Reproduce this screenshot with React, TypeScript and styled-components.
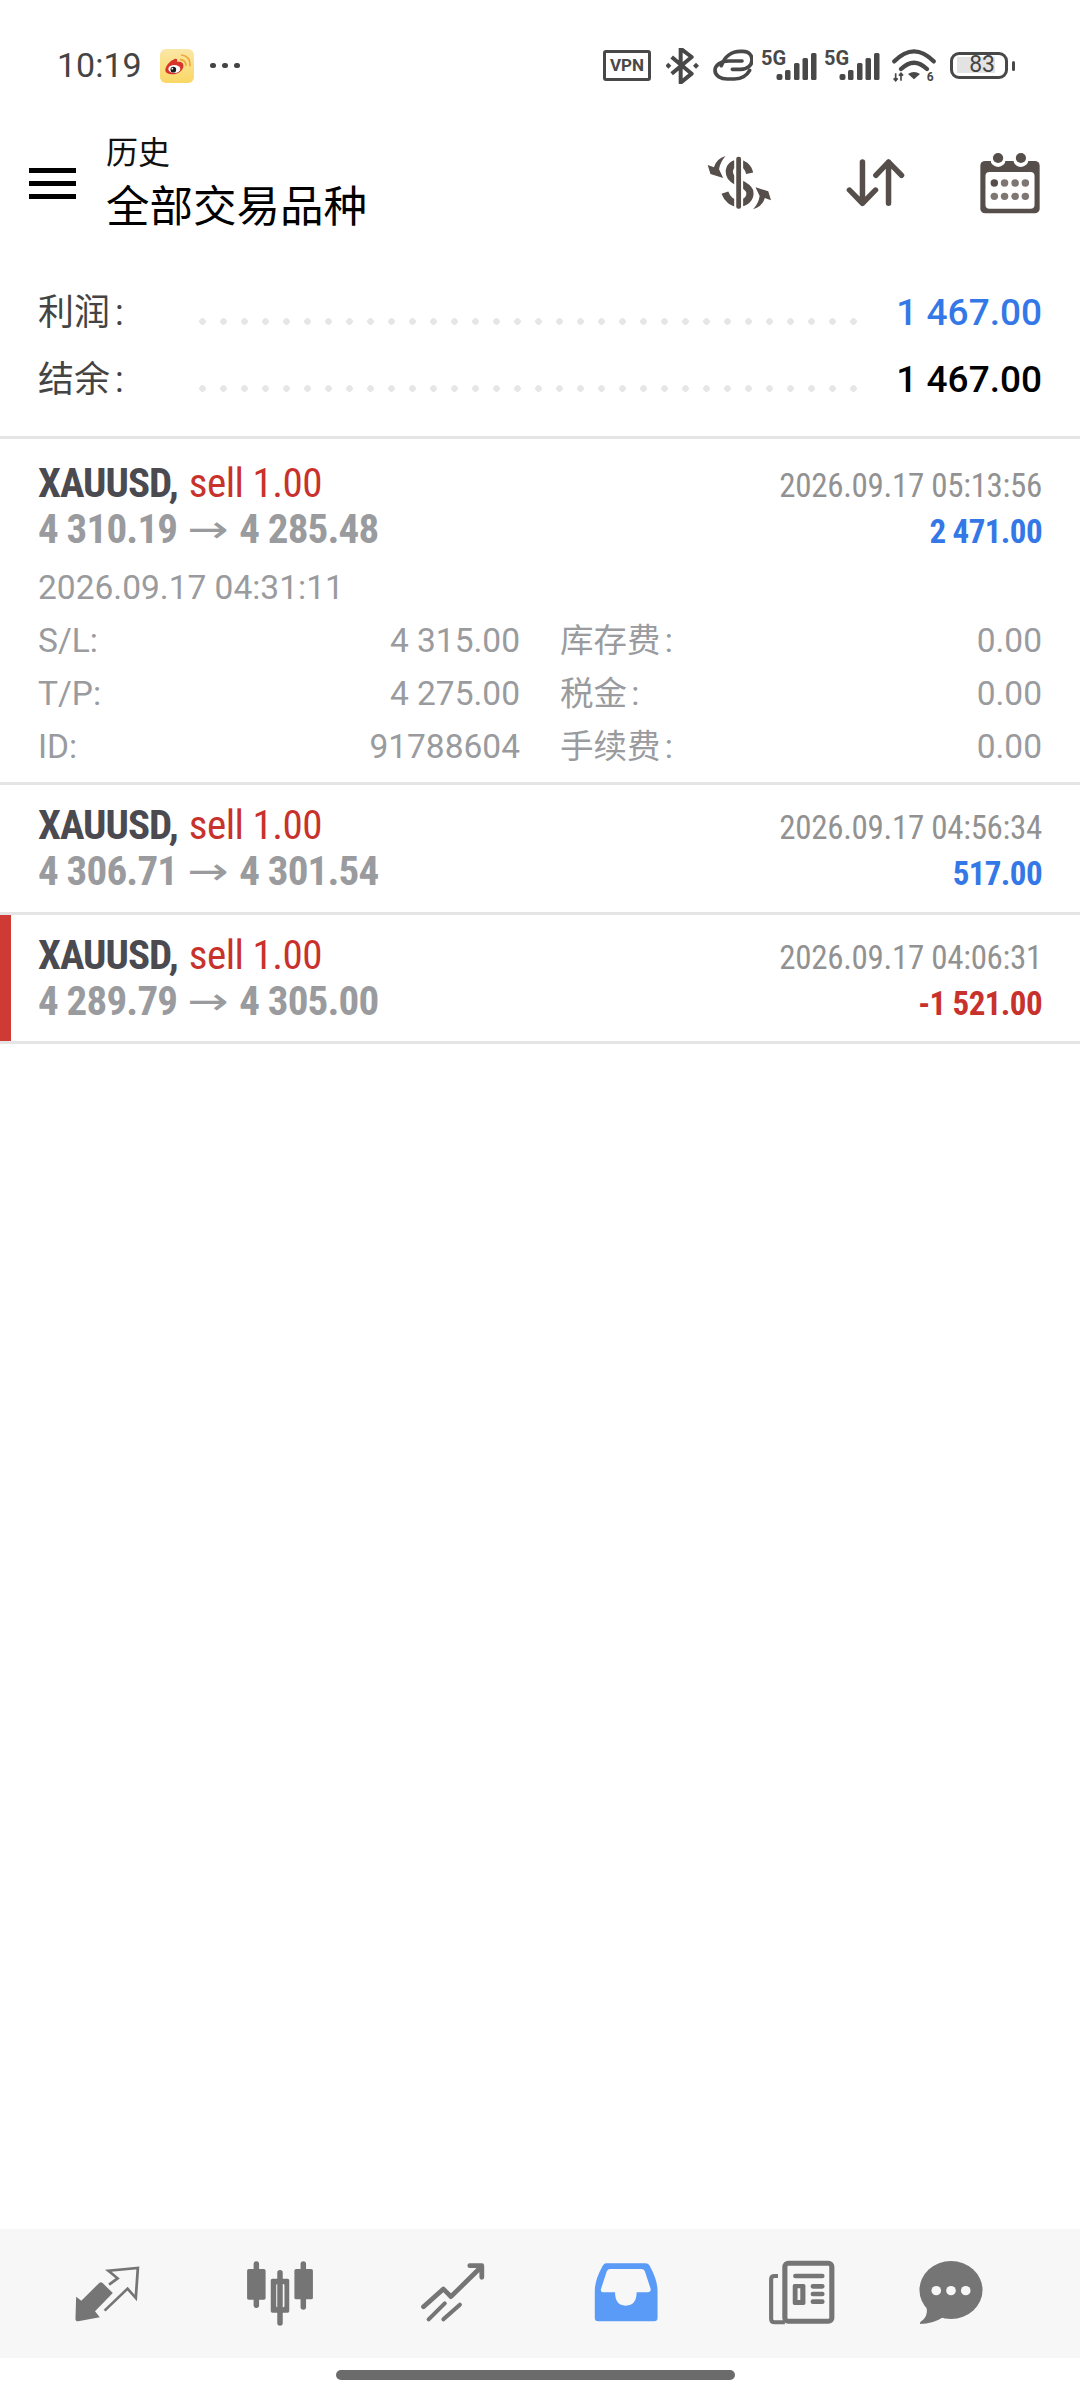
import React from 'react';
import styled, { createGlobalStyle } from 'styled-components';

const GlobalStyle = createGlobalStyle`
  html, body {
    margin: 0;
    padding: 0;
    background: #ffffff;
  }
  body {
    font-family: Roboto, "Noto Sans CJK SC", sans-serif;
  }
`;

const Page = styled.div`
  position: relative;
  width: 1080px;
  height: 2400px;
  display: flex;
  flex-direction: column;
  background: #ffffff;
  overflow: hidden;
`;

const StatusBar = styled.div`
  height: 47px;
  margin-top: 42px;
  display: flex;
  align-items: center;
  justify-content: space-between;
  padding: 0 65px 0 57px;
`;

const StatusLeft = styled.div`
  display: flex;
  align-items: center;
`;

const StatusRight = styled.div`
  display: flex;
  align-items: center;
  height: 36px;
`;

const Clock = styled.span`
  font-size: 34px;
  color: #444444;
  line-height: 47px;
  width: 103px;
`;

const MoreDots = styled.span`
  display: flex;
  gap: 6.5px;
  margin-left: 16px;
`;

const MoreDot = styled.i`
  width: 5.5px;
  height: 5.5px;
  border-radius: 50%;
  background: #444444;
`;

const VpnBox = styled.span`
  width: 48px;
  height: 31px;
  box-sizing: border-box;
  border: 3px solid #484848;
  border-radius: 3px;
  font-size: 17px;
  font-weight: 700;
  line-height: 25px;
  text-align: center;
  color: #484848;
`;

const SignalGroup = styled.span<{ $gap: number }>`
  display: flex;
  height: 30px;
  margin-left: ${(p) => p.$gap}px;
`;

const SignalLabel = styled.span`
  font-size: 20px;
  font-weight: 700;
  line-height: 15px;
  color: #484848;
  width: 25px;
`;

const Battery = styled.span`
  width: 58px;
  height: 27px;
  box-sizing: border-box;
  border: 3px solid #484848;
  border-radius: 9px;
  margin-left: 14px;
  padding: 2px 0 0 4px;
`;

const BatteryLevel = styled.span`
  display: block;
  width: 38px;
  height: 16px;
  background: #e3e3e3;
  font-size: 23px;
  line-height: 16px;
  text-align: right;
  color: #444444;
`;

const BatteryNub = styled.span`
  width: 3px;
  height: 10px;
  border-radius: 2px;
  background: #484848;
  margin-left: 4px;
`;

const Header = styled.div`
  height: 112px;
  margin-top: 38px;
  display: flex;
  align-items: center;
  padding-left: 29px;
`;

const Burger = styled.div`
  width: 47px;
  display: flex;
  flex-direction: column;
  gap: 8px;
`;

const BurgerLine = styled.i`
  display: block;
  height: 5px;
  background: #000000;
`;

const TitleBlock = styled.div`
  margin-left: 30px;
  flex: 1;
`;

const Subtitle = styled.div`
  font-size: 32px;
  line-height: 50px;
  color: #111111;
`;

const Title = styled.div`
  font-size: 43.5px;
  line-height: 60px;
  color: #000000;
`;

const HeaderIcons = styled.div`
  display: flex;
  align-items: center;
  margin-right: 40px;
  gap: 75px;
`;

const Summary = styled.div`
  padding: 40px 38px 23px 38px;
  border-bottom: 3px solid #e5e5e5;
`;

const SummaryRow = styled.div`
  height: 67px;
  display: flex;
  align-items: center;
`;

const SummaryLabel = styled.div`
  width: 154px;
  font-size: 36px;
  word-spacing: -4px;
  color: #444444;
  margin-bottom: 8px;
`;

const Leader = styled.div`
  flex: 1;
  height: 7px;
  margin-top: 18px;
  background: radial-gradient(circle, #e6e6e6 3px, transparent 3.6px) 0 0 / 21px 100%;
`;

const SummaryValue = styled.div<{ $tone: string }>`
  width: 178px;
  font-size: 37px;
  font-weight: 500;
  text-align: right;
  color: ${(p) => p.$tone};
`;

const Trade = styled.div<{ $loss?: boolean; $top: number }>`
  position: relative;
  padding: ${(p) => p.$top}px 38px 0 38px;
  border-bottom: 3px solid #e5e5e5;
  &::before {
    content: '';
    display: ${(p) => (p.$loss ? 'block' : 'none')};
    position: absolute;
    left: 0;
    top: 0;
    bottom: 0;
    width: 11px;
    background: #cf3a35;
  }
`;

const TradeTop = styled.div<{ $height: number }>`
  height: ${(p) => p.$height}px;
  display: flex;
  justify-content: space-between;
`;

const Condensed = styled.div`
  font-stretch: 75%;
  white-space: nowrap;
`;

const MainLine = styled(Condensed)`
  font-size: 41px;
  line-height: 46px;
  display: flex;
  align-items: center;
`;

const Symbol = styled.span`
  font-weight: 700;
  letter-spacing: -1px;
  color: #4a4a50;
  margin-right: 11px;
`;

const Side = styled.span`
  letter-spacing: -0.5px;
  color: #c8322d;
`;

const Price = styled.span`
  font-weight: 700;
  letter-spacing: -0.8px;
  color: #9a9b9e;
`;

const Arrow = styled.span`
  font-family: "DejaVu Sans", sans-serif;
  font-stretch: normal;
  font-size: 38px;
  line-height: 46px;
  color: #9a9b9e;
  margin: 0 15px;
  transform: scaleX(1.3);
`;

const TradeRight = styled.div`
  text-align: right;
  padding-top: 3px;
`;

const TradeDate = styled(Condensed)`
  font-size: 33px;
  line-height: 46px;
  letter-spacing: -0.3px;
  color: #929292;
`;

const Profit = styled(Condensed)<{ $tone: string }>`
  font-size: 33px;
  line-height: 45px;
  letter-spacing: -0.6px;
  font-weight: 700;
  color: ${(p) => p.$tone};
`;

const Details = styled.div`
  padding-bottom: 9px;
  font-size: 33.5px;
  line-height: 53px;
  color: #9a9b9e;
`;

const DetailGrid = styled.div`
  display: grid;
  grid-template-columns: 1fr 1fr;
  column-gap: 40px;
`;

const DetailCell = styled.div`
  display: flex;
  justify-content: space-between;
`;

const DetailLabel = styled.span`
  word-spacing: -4px;
`;

const BottomNav = styled.nav`
  position: absolute;
  left: 0;
  right: 0;
  bottom: 42px;
  height: 129px;
  background: #f7f7f7;
  display: flex;
  align-items: center;
  padding-left: 71px;
  gap: 101px;
`;

const NavItem = styled.span<{ $shift?: number }>`
  display: flex;
  margin-left: ${(p) => p.$shift || 0}px;
`;

const HomeBar = styled.div`
  position: absolute;
  left: 336px;
  bottom: 20px;
  width: 399px;
  height: 10px;
  border-radius: 5px;
  background: #6b6b6b;
`;

const WeiboIcon = () => (
  <svg width="34" height="34" viewBox="60 28 102 102">
    <defs>
      <linearGradient id="weibo-bg" x1="0" y1="0" x2="0" y2="1">
        <stop offset="0" stopColor="#fbe7a6" />
        <stop offset="1" stopColor="#f9d765" />
      </linearGradient>
    </defs>
    <rect x="60" y="28" width="102" height="102" rx="18" fill="url(#weibo-bg)" />
    <path d="M76 92c0-12 12-28 28-34 7-2 9 2 7 9 13-2 21 4 19 15-3 13-18 22-32 22-12 0-22-4-22-12z" fill="#d8352a" />
    <ellipse cx="103" cy="88" rx="18" ry="12" fill="#ffffff" />
    <circle cx="100" cy="90" r="8.5" fill="#1d1d1d" />
    <circle cx="97" cy="87" r="2.5" fill="#ffffff" />
    <path d="M122 60q14 1 16 16M125 46q26 3 25 32" stroke="#eea63a" strokeWidth="5" fill="none" strokeLinecap="round" />
  </svg>
);

const BluetoothIcon = () => (
  <svg width="33" height="36" viewBox="228 38 99 108" style={{ marginLeft: 15 }}>
    <path d="M245 65l60 50-33 27V40l33 25-60 50" stroke="#484848" strokeWidth="12" fill="none" strokeLinejoin="round" />
    <path d="M235 82l9 9-9 9-9-9zM318 82l9 9-9 9-9-9z" fill="#484848" />
  </svg>
);

const LinkIcon = () => (
  <svg width="40" height="33" viewBox="368 44 120 99" style={{ marginLeft: 14 }}>
    <path d="M393 94C403 66 425 51 450 51H458C476 51 485 63 485 77C485 93 471 105 451 105H426" stroke="#484848" strokeWidth="11" fill="none" strokeLinecap="round" />
    <path d="M455 80H416C391 80 374 92 374 108C374 124 391 134 411 134H432C452 134 470 123 478 108" stroke="#484848" strokeWidth="11" fill="none" strokeLinecap="round" />
  </svg>
);

const SignalBars = () => (
  <svg width="41" height="28" viewBox="0 0 40 28" style={{ marginLeft: -10, marginTop: 2 }}>
    <rect x="0" y="21" width="6" height="6" rx="2" fill="#484848" />
    <rect x="8.5" y="17" width="5.5" height="10" rx="1.5" fill="#484848" />
    <rect x="17.5" y="10" width="5.5" height="17" rx="1.5" fill="#484848" />
    <rect x="26" y="5" width="5.5" height="22" rx="1.5" fill="#484848" />
    <rect x="34.5" y="0" width="5.5" height="27" rx="1.5" fill="#484848" />
  </svg>
);

const WifiIcon = () => (
  <svg width="44" height="35" viewBox="186 44 132 105" style={{ marginLeft: 12 }}>
    <path d="M193 84q59-60 118 0" stroke="#484848" strokeWidth="13" fill="none" strokeLinecap="round" />
    <path d="M213 107q39-38 78 0" stroke="#484848" strokeWidth="13" fill="none" strokeLinecap="round" />
    <path d="M234 122q18-12 36 0l-18 16z" fill="#484848" />
    <path d="M197 120v22M191 135l6 7 6-7M213 142v-22M207 127l6-7 6 7" stroke="#484848" strokeWidth="5" fill="none" />
    <text x="290" y="142" fontSize="36" fontWeight="700" fill="#484848" fontFamily="Roboto, sans-serif">6</text>
  </svg>
);

const ICON_INK = '#564e4a';

const CurrencyIcon = () => (
  <svg width="64" height="54" viewBox="486 410 186 162" preserveAspectRatio="none">
    <path d="M610 462c-5-22-20-30-32-30-23 0-30 18-26 33 6 25 48 25 58 50 5 25-15 37-32 37-18 0-33-12-40-32" stroke={ICON_INK} strokeWidth="21" fill="none" />
    <rect x="565" y="412" width="26" height="160" fill="#ffffff" />
    <rect x="571" y="412" width="14" height="156" rx="6" fill={ICON_INK} />
    <path d="M540 410q-27 8-34 34l-18-7 8 27 37 12-12-26q3-22 19-40z" fill={ICON_INK} />
    <path d="M620 570q27-8 34-34l18 7-8-27-37-12 12 26q-3 22-19 40z" fill={ICON_INK} />
  </svg>
);

const SortIcon = () => (
  <svg width="59" height="50" viewBox="888 416 172 150" preserveAspectRatio="none">
    <path d="M936 428v124M898 512l38 40 38-40M1012 552V428M975 468l37-40 38 40" stroke={ICON_INK} strokeWidth="16" fill="none" strokeLinecap="round" strokeLinejoin="round" />
  </svg>
);

const CalendarIcon = () => (
  <svg width="60" height="61" viewBox="1278 396 176 183" preserveAspectRatio="none">
    <rect x="1279" y="420" width="174" height="157" rx="14" fill={ICON_INK} />
    <rect x="1294" y="453" width="144" height="110" rx="12" fill="#ffffff" />
    <circle cx="1331" cy="416" r="22" fill="#ffffff" />
    <circle cx="1398" cy="416" r="22" fill="#ffffff" />
    <circle cx="1331" cy="411" r="15" fill={ICON_INK} />
    <circle cx="1398" cy="411" r="15" fill={ICON_INK} />
    <circle cx="1320" cy="486" r="11" fill={ICON_INK} />
    {[1350, 1381, 1411].map((x) => (
      <circle key={x} cx={x} cy="486" r="11" fill="#7d7673" />
    ))}
    {[1320, 1350, 1381, 1411].map((x) => (
      <circle key={x} cx={x} cy="526" r="11" fill="#7d7673" />
    ))}
  </svg>
);

const NAV_INK = '#757575';

const NavSvg: React.FC<{ cx: number; children: React.ReactNode }> = ({ cx, children }) => (
  <svg width="72" height="70" viewBox={`${cx - 105} 145 210 210`} preserveAspectRatio="none">
    {children}
  </svg>
);

const TradeNavIcon = () => (
  <NavSvg cx={312}>
    <path d="M222 258l15 12 53-54q5-4 10 2l29 29-52 55 14 18-63 12q-8 0-8-7z" fill={NAV_INK} />
    <path d="M318 222l25-19-27-23 86-8-6 90-24-28-67 66" stroke={NAV_INK} strokeWidth="8" fill="none" />
  </NavSvg>
);

const ChartNavIcon = () => (
  <NavSvg cx={813}>
    <rect x="736" y="152" width="16" height="140" rx="8" fill={NAV_INK} />
    <rect x="717" y="175" width="54" height="92" rx="5" fill={NAV_INK} />
    <rect x="805" y="178" width="16" height="167" rx="8" fill={NAV_INK} />
    <path fillRule="evenodd" d="M791 204h44q5 0 5 5v92q0 5-5 5h-44q-5 0-5-5v-92q0-5 5-5zM806 220q-4 0-4 4v62q0 4 4 4h16q4 0 4-4v-62q0-4-4-4z" fill={NAV_INK} />
    <rect x="873" y="152" width="16" height="145" rx="8" fill={NAV_INK} />
    <rect x="855" y="175" width="54" height="91" rx="5" fill={NAV_INK} />
  </NavSvg>
);

const IndicatorNavIcon = () => (
  <NavSvg cx={1316}>
    <path d="M1230 288l58-53 22 23 85-86M1365 165h35v35" stroke={NAV_INK} strokeWidth="14" fill="none" strokeLinecap="round" strokeLinejoin="round" />
    <path d="M1245 326l47-48M1288 326l48-44" stroke={NAV_INK} strokeWidth="12" fill="none" strokeLinecap="round" />
  </NavSvg>
);

const InboxNavIcon = () => (
  <NavSvg cx={253}>
    <path
      fillRule="evenodd"
      d="M195 158h115q8 0 12 7 23 43 23 75v82q0 10-10 10H172q-10 0-10-10v-82q0-32 23-75 5-7 10-7zM207 175q-7 0-10 7l-17 53q-2 10 8 10h33q0 40 31 40 32 0 32-40h32q10 0 9-10l-17-53q-3-7-10-7z"
      fill="#5a9bf8"
    />
  </NavSvg>
);

const NewsNavIcon = () => (
  <NavSvg cx={760}>
    <rect x="710" y="158" width="137" height="174" rx="10" stroke={NAV_INK} strokeWidth="15" fill="none" />
    <path d="M690 196h-10q-10 0-10 10v119q0 10 10 10h30" stroke={NAV_INK} strokeWidth="12" fill="none" />
    <path d="M741 196h78M792 227h27M792 250h27M792 273h27" stroke={NAV_INK} strokeWidth="14" strokeLinecap="round" />
    <path fillRule="evenodd" d="M738 220h27q5 0 5 5v53q0 5-5 5h-27q-5 0-5-5v-53q0-5 5-5zM747 233v35h8v-35z" fill={NAV_INK} />
  </NavSvg>
);

const ChatNavIcon = () => (
  <NavSvg cx={1193}>
    <ellipse cx="1193" cy="238" rx="92" ry="87" fill={NAV_INK} />
    <path d="M1122 290q5 30-19 45v5q37 0 67-20z" fill={NAV_INK} />
    {[1150, 1193, 1236].map((x) => (
      <circle key={x} cx={x} cy="240" r="14" fill="#f7f7f7" />
    ))}
  </NavSvg>
);

interface ITrade {
  open: string;
  close: string;
  time: string;
  profit: string;
  tone: string;
  top: number;
  height: number;
  loss?: boolean;
}

const BLUE = '#3478e8';
const RED = '#c8322d';

const trades: ITrade[] = [
  { open: '4 306.71', close: '4 301.54', time: '2026.09.17 04:56:34', profit: '517.00', tone: BLUE, top: 17, height: 110 },
  { open: '4 289.79', close: '4 305.00', time: '2026.09.17 04:06:31', profit: '-1 521.00', tone: RED, top: 17, height: 109, loss: true },
];

const TradeHead: React.FC<{ open: string; close: string; time: string; profit: string; tone: string }> = ({
  open,
  close,
  time,
  profit,
  tone,
}) => (
  <>
    <div>
      <MainLine>
        <Symbol>XAUUSD,</Symbol>
        <Side>sell 1.00</Side>
      </MainLine>
      <MainLine>
        <Price>{open}</Price>
        <Arrow>→</Arrow>
        <Price>{close}</Price>
      </MainLine>
    </div>
    <TradeRight>
      <TradeDate>{time}</TradeDate>
      <Profit $tone={tone}>{profit}</Profit>
    </TradeRight>
  </>
);

const details = [
  ['S/L:', '4 315.00', '库存费 :', '0.00'],
  ['T/P:', '4 275.00', '税金 :', '0.00'],
  ['ID:', '91788604', '手续费 :', '0.00'],
];

export default function App() {
  return (
    <Page>
      <GlobalStyle />
      <StatusBar>
        <StatusLeft>
          <Clock>10:19</Clock>
          <WeiboIcon />
          <MoreDots>
            <MoreDot />
            <MoreDot />
            <MoreDot />
          </MoreDots>
        </StatusLeft>
        <StatusRight>
          <VpnBox>VPN</VpnBox>
          <BluetoothIcon />
          <LinkIcon />
          <SignalGroup $gap={8}>
            <SignalLabel>5G</SignalLabel>
            <SignalBars />
          </SignalGroup>
          <SignalGroup $gap={7}>
            <SignalLabel>5G</SignalLabel>
            <SignalBars />
          </SignalGroup>
          <WifiIcon />
          <Battery>
            <BatteryLevel>83</BatteryLevel>
          </Battery>
          <BatteryNub />
        </StatusRight>
      </StatusBar>

      <Header>
        <Burger>
          <BurgerLine />
          <BurgerLine />
          <BurgerLine />
        </Burger>
        <TitleBlock>
          <Subtitle>历史</Subtitle>
          <Title>全部交易品种</Title>
        </TitleBlock>
        <HeaderIcons>
          <CurrencyIcon />
          <SortIcon />
          <CalendarIcon />
        </HeaderIcons>
      </Header>

      <Summary>
        <SummaryRow>
          <SummaryLabel>利润 :</SummaryLabel>
          <Leader />
          <SummaryValue $tone={BLUE}>1 467.00</SummaryValue>
        </SummaryRow>
        <SummaryRow>
          <SummaryLabel>结余 :</SummaryLabel>
          <Leader />
          <SummaryValue $tone="#000000">1 467.00</SummaryValue>
        </SummaryRow>
      </Summary>

      <Trade $top={21}>
        <TradeTop $height={101}>
          <TradeHead open="4 310.19" close="4 285.48" time="2026.09.17 05:13:56" profit="2 471.00" tone={BLUE} />
        </TradeTop>
        <Details>
          <div>2026.09.17 04:31:11</div>
          {details.map((row) => (
            <DetailGrid key={row[0]}>
              <DetailCell>
                <DetailLabel>{row[0]}</DetailLabel>
                <span>{row[1]}</span>
              </DetailCell>
              <DetailCell>
                <DetailLabel>{row[2]}</DetailLabel>
                <span>{row[3]}</span>
              </DetailCell>
            </DetailGrid>
          ))}
        </Details>
      </Trade>

      {trades.map((t) => (
        <Trade key={t.time} $top={t.top} $loss={t.loss}>
          <TradeTop $height={t.height}>
            <TradeHead open={t.open} close={t.close} time={t.time} profit={t.profit} tone={t.tone} />
          </TradeTop>
        </Trade>
      ))}

      <BottomNav>
        <NavItem><TradeNavIcon /></NavItem>
        <NavItem><ChartNavIcon /></NavItem>
        <NavItem><IndicatorNavIcon /></NavItem>
        <NavItem><InboxNavIcon /></NavItem>
        <NavItem $shift={3}><NewsNavIcon /></NavItem>
        <NavItem $shift={-24}><ChatNavIcon /></NavItem>
      </BottomNav>
      <HomeBar />
    </Page>
  );
}
